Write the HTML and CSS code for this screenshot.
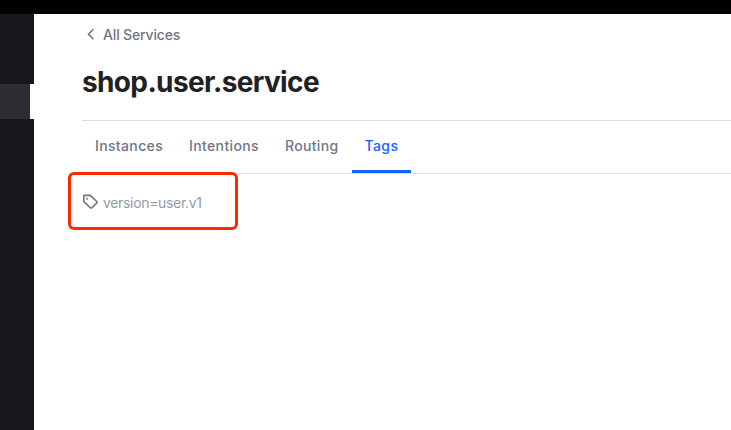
FILE: index.html
```html
<!DOCTYPE html>
<html lang="en">
<head>
<meta charset="utf-8">
<title>shop.user.service</title>
<link rel="stylesheet" href="styles.css">
</head>
<body>
<div class="topbar"></div>
<div class="shell">
  <aside class="sidebar"><div class="selected"></div></aside>
  <main class="content">
    <a class="back">
      <svg class="chevron" width="17" height="16" viewBox="0 0 17 16"><path d="M11.4 3.3 6.5 8.3l4.9 5"/></svg>
      <span>All Services</span>
    </a>
    <h1 class="title">shop.user.service</h1>
    <nav class="tabs">
      <a class="tab">Instances</a>
      <a class="tab">Intentions</a>
      <a class="tab">Routing</a>
      <a class="tab active">Tags</a>
    </nav>
    <div class="tag">
      <svg class="tag-icon" width="17" height="16" viewBox="0 0 17 16"><path d="M1.8 1.4H8.2l6.6 6.1a1 1 0 0 1 0 1.4l-4.9 4.9a1 1 0 0 1-1.4 0L1.8 7.7z"/><circle cx="5.1" cy="4.7" r="1"/></svg>
      <span>version=user.v1</span>
      <div class="highlight"></div>
    </div>
  </main>
</div>
</body>
</html>
```

FILE: styles.css
```css
* { box-sizing: border-box; }
body {
  margin: 0;
  height: 430px;
  overflow: hidden;
  display: flex;
  flex-direction: column;
  background: #fff;
  color: #6f7682;
  font-family: Inter, "Liberation Sans", sans-serif;
}
.topbar { height: 14px; background: #000; }
.shell { flex: 1; display: flex; }
.sidebar { width: 34px; padding-top: 70px; background: #16171c; }
.selected { height: 35px; background: #2d2e33; border-right: 4px solid #fff; }
.content { flex: 1; padding-left: 48px; }
.back {
  display: flex;
  align-items: center;
  gap: 4px;
  height: 42px;
  padding-bottom: 2px;
  font-size: 14px;
  font-weight: 500;
  letter-spacing: -0.16px;
}
.chevron { fill: none; stroke: #6f7682; stroke-width: 1.6; }
.title {
  margin: 0;
  height: 64px;
  line-height: 52px;
  font-size: 28px;
  font-weight: 700;
  letter-spacing: -0.64px;
  color: #1f2124;
}
.tabs {
  display: flex;
  height: 54px;
  border-top: 1px solid #dcdde5;
  border-bottom: 1px solid #dcdde5;
}
.tab {
  padding: 0 13px;
  line-height: 50px;
  font-size: 14px;
  font-weight: 500;
  letter-spacing: 0.36px;
}
.active { color: #1563ff; border-bottom: 3px solid #1563ff; }
.tag {
  position: relative;
  display: flex;
  align-items: center;
  gap: 4px;
  height: 58px;
  padding-bottom: 2px;
  font-size: 14px;
  letter-spacing: -0.33px;
  color: #9499a6;
}
.tag-icon { fill: none; stroke: #6f7682; stroke-width: 1.6; stroke-linejoin: round; }
.tag-icon circle { fill: #6f7682; stroke: none; }
.highlight {
  position: absolute;
  left: -14px;
  top: -2px;
  width: 170px;
  height: 58px;
  border: 3px solid #fb2804;
  border-radius: 6px;
}
```
